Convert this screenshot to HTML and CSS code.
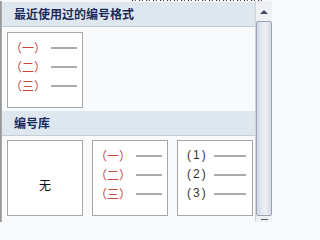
FILE: index.html
```html
<!DOCTYPE html>
<html lang="zh-CN">
<head>
<meta charset="utf-8">
<link rel="stylesheet" href="styles.css">
</head>
<body>
<div class="topline"><div class="dots"></div></div>
<div class="window">
  <div class="leftedge"></div>
  <div class="main">
    <div class="header">最近使用过的编号格式</div>
    <div class="panel recent">
      <div class="box cn">
        <div class="row"><span class="label">（一）</span><span class="line"></span></div>
        <div class="row"><span class="label">（二）</span><span class="line"></span></div>
        <div class="row"><span class="label">（三）</span><span class="line"></span></div>
      </div>
    </div>
    <div class="header">编号库</div>
    <div class="panel lib">
      <div class="box none"><span>无</span></div>
      <div class="box cn">
        <div class="row"><span class="label">（一）</span><span class="line"></span></div>
        <div class="row"><span class="label">（二）</span><span class="line"></span></div>
        <div class="row"><span class="label">（三）</span><span class="line"></span></div>
      </div>
      <div class="box num">
        <div class="row"><span class="label">(1)</span><span class="line"></span></div>
        <div class="row"><span class="label">(2)</span><span class="line"></span></div>
        <div class="row"><span class="label">(3)</span><span class="line"></span></div>
      </div>
    </div>
  </div>
  <div class="scrollbar">
    <div class="upbtn"><span class="tri"></span></div>
    <div class="thumb"></div>
    <div class="downbtn"><span class="dash"></span></div>
  </div>
</div>
</body>
</html>
```

FILE: styles.css
```css
html, body {
  margin: 0;
  padding: 0;
}
body {
  width: 272px;
  height: 222px;
  overflow: hidden;
  background: #f9fafb;
  font-family: "Noto Sans CJK SC", "Liberation Sans", sans-serif;
  font-size: 12px;
}
.topline {
  height: 1px;
  background: #f4f6f8;
}
.dots {
  margin-left: 132px;
  width: 132px;
  height: 1px;
  background: repeating-linear-gradient(to right, #2a2a2a 0 1px, #e8e8e8 1px 3px, #555 3px 4px, #fff 4px 7px);
}
.window {
  display: flex;
  height: 221px;
}
.leftedge {
  width: 2px;
  background: linear-gradient(to right, #8e8e8e, #b4b4b4);
}
.main {
  flex: 1;
  display: flex;
  flex-direction: column;
  padding-top: 1px;
  background: #f9fafb;
}
.header {
  height: 24px;
  line-height: 24px;
  padding-left: 12px;
  background: #dfe7ee;
  border-bottom: 1px solid #c4ccd5;
  color: #1c2a5a;
  font-weight: bold;
  font-size: 12px;
}
.panel {
  display: flex;
  gap: 9px;
  padding: 5px 0 3px 5px;
}
.panel.lib {
  padding-top: 4px;
}
.box {
  width: 74px;
  height: 74px;
  border: 1px solid #a6a6a6;
  background: #ffffff;
  display: flex;
  flex-direction: column;
  padding-top: 5px;
  box-sizing: content-box;
}
.box.cn, .box.num {
  height: 69px;
}
.box.none {
  height: 62px;
  padding-top: 12px;
  align-items: center;
  justify-content: center;
  color: #111;
  font-size: 12px;
}
.row {
  height: 19px;
  display: flex;
  align-items: center;
}
.cn .label {
  width: 41px;
  padding-left: 2px;
  color: #c24a3e;
  font-size: 12px;
  line-height: 19px;
}
.cn .line {
  width: 26px;
  height: 2px;
  background: #ababab;
}
.num .label {
  width: 27px;
  padding-left: 9px;
  color: #333333;
  font-family: "Liberation Sans", sans-serif;
  font-size: 12px;
  letter-spacing: 2px;
  line-height: 19px;
}
.num .line {
  width: 32px;
  height: 2px;
  background: #ababab;
}
.scrollbar {
  width: 16px;
  border-left: 1px solid #cfd4da;
  background: #eef0f3;
  display: flex;
  flex-direction: column;
}
.upbtn {
  height: 20px;
  display: flex;
  align-items: center;
  justify-content: center;
}
.tri {
  width: 0;
  height: 0;
  border-left: 4px solid transparent;
  border-right: 4px solid transparent;
  border-bottom: 4px solid #414b62;
  margin-top: 2px;
}
.thumb {
  flex: 1;
  border: 1px solid #9aa3b3;
  border-radius: 2px;
  background: linear-gradient(to right, #d3d8e3, #e9ecf3 45%, #eef0f5 60%, #d6dbe5);
}
.downbtn {
  height: 6px;
  display: flex;
  justify-content: center;
  align-items: flex-end;
}
.dash {
  width: 7px;
  height: 1px;
  background: #5a6070;
  margin-bottom: 2px;
}
```
